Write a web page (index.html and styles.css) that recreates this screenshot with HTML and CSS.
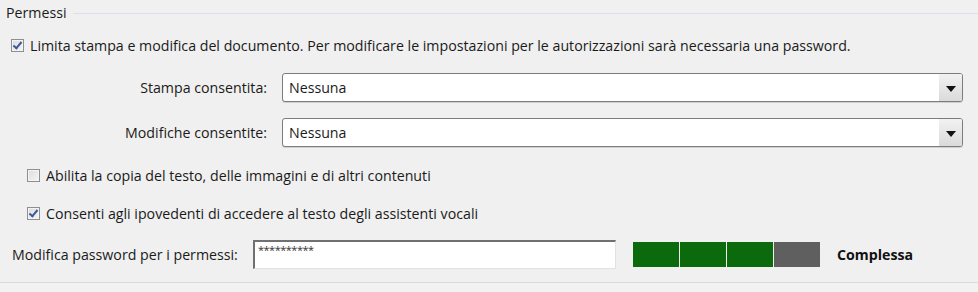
FILE: index.html
```html
<!DOCTYPE html>
<html lang="it">
<head>
    <meta charset="UTF-8">
    <title>Permessi</title>
    <link rel="stylesheet" href="styles.css">
</head>
<body>
    <div class="panel">
        <div class="group-title">
            <span>Permessi</span>
            <div class="rule"></div>
        </div>

        <label class="check first">
            <span class="box on"></span>
            Limita stampa e modifica del documento. Per modificare le impostazioni per le autorizzazioni sarà necessaria una password.
        </label>

        <div class="field">
            <div class="field-label">Stampa consentita:</div>
            <div class="combo">
                <span class="combo-text">Nessuna</span>
                <span class="combo-btn"><span class="arrow"></span></span>
            </div>
        </div>

        <div class="field">
            <div class="field-label">Modifiche consentite:</div>
            <div class="combo">
                <span class="combo-text">Nessuna</span>
                <span class="combo-btn"><span class="arrow"></span></span>
            </div>
        </div>

        <label class="check sub">
            <span class="box"></span>
            Abilita la copia del testo, delle immagini e di altri contenuti
        </label>

        <label class="check sub">
            <span class="box on"></span>
            Consenti agli ipovedenti di accedere al testo degli assistenti vocali
        </label>

        <div class="pwd-row">
            <div class="pwd-label">Modifica password per i permessi:</div>
            <div class="pwd-input">**********</div>
            <div class="meter">
                <span class="seg ok"></span>
                <span class="seg ok"></span>
                <span class="seg ok"></span>
                <span class="seg"></span>
            </div>
            <div class="meter-text">Complessa</div>
        </div>
    </div>
    <div class="footer"></div>
</body>
</html>
```

FILE: styles.css
```css
body {
    margin: 0;
    background: #f0f0f0;
    font-family: "Open Sans", "Noto Sans", sans-serif;
    font-size: 14.2px;
    color: #1a1a1a;
    width: 978px;
    height: 292px;
    overflow: hidden;
}

.panel {
    height: 283px;
    border-bottom: 1px solid #d9dbde;
    box-sizing: border-box;
}

.group-title {
    display: flex;
    align-items: center;
    height: 25px;
    padding-left: 6px;
}

.group-title .rule {
    flex: 1;
    height: 1px;
    background: #dbe1e8;
    margin-left: 6px;
    margin-top: 1px;
}

.check {
    display: flex;
    align-items: center;
    gap: 6px;
    height: 20px;
}

.check.first {
    margin-top: 10px;
    padding-left: 11px;
}

.check.sub {
    padding-left: 27px;
    margin-top: 18px;
}

.box {
    flex: none;
    width: 11px;
    height: 11px;
    border: 1px solid #8e8f8f;
    background: linear-gradient(135deg, #dcdcdc, #f6f6f6);
    box-shadow: inset 0 0 0 1px #f4f4f4;
    position: relative;
}

.box.on::after {
    content: "";
    position: absolute;
    left: 3px;
    top: 0px;
    width: 3px;
    height: 7px;
    border: solid #3c5a9a;
    border-width: 0 2px 2px 0;
    transform: rotate(40deg);
}

.field {
    display: flex;
    align-items: center;
    margin-top: 18px;
}

.field + .field {
    margin-top: 16px;
}

.field-label {
    text-align: right;
    padding-right: 15px;
    box-sizing: border-box;
    width: 282px;
}

.combo {
    width: 681px;
    height: 29px;
    box-sizing: border-box;
    border: 1px solid #7c7c7c;
    border-radius: 3px;
    background: #fff;
    display: flex;
    align-items: center;
    box-shadow: 0 1px 0 #d0d0d0;
}

.combo-text {
    flex: 1;
    padding-left: 6px;
}

.combo-btn {
    width: 23px;
    height: 100%;
    background: linear-gradient(#f2f2f2, #dadada);
    display: flex;
    align-items: center;
    justify-content: center;
    border-radius: 0 2px 2px 0;
}

.arrow {
    width: 0;
    height: 0;
    border-left: 5px solid transparent;
    border-right: 5px solid transparent;
    border-top: 6px solid #111;
    margin-top: 2px;
}

.pwd-row {
    display: flex;
    align-items: center;
    margin-top: 17px;
    padding-left: 12px;
}

.pwd-label {
    width: 241px;
}

.pwd-input {
    width: 363px;
    height: 29px;
    box-sizing: border-box;
    background: #fff;
    border-top: 2px solid #707070;
    border-left: 2px solid #707070;
    border-right: 1px solid #e2e2e2;
    border-bottom: 1px solid #e2e2e2;
    padding: 2px 0 0 3px;
    font-size: 11px;
    line-height: 12px;
    letter-spacing: -0.5px;
    color: #333;
}

.meter {
    display: flex;
    gap: 1px;
    margin-left: 17px;
    height: 25px;
}

.seg {
    width: 46px;
    background: #5f5f5f;
}

.seg.ok {
    background: #0b6a0b;
}

.meter-text {
    margin-left: 17px;
    font-weight: bold;
    color: #111;
}

.footer {
    height: 9px;
    background: #f2f2f2;
}
```
